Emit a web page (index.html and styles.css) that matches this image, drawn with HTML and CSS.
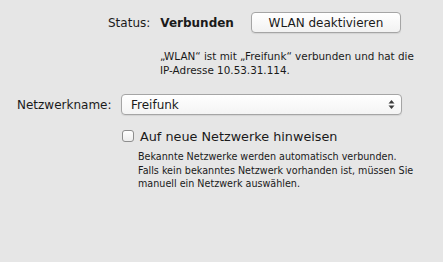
FILE: index.html
```html
<!DOCTYPE html>
<html lang="de">
<head>
  <meta charset="UTF-8">
  <title>Netzwerk – WLAN</title>
  <link rel="stylesheet" href="styles.css">
</head>
<body>
  <!-- WLAN settings pane -->
  <div class="pane">
    <!-- Status row -->
    <div class="status-row">
      <span class="label">Status:</span>
      <span class="status-value">Verbunden</span>
      <button class="mac-button">WLAN deaktivieren</button>
    </div>
    <p class="status-info">„WLAN“ ist mit „Freifunk“ verbunden und hat die<br>IP-Adresse 10.53.31.114.</p>

    <!-- Network name -->
    <div class="network-row">
      <span class="label network-label">Netzwerkname:</span>
      <div class="popup">
        <span>Freifunk</span>
        <svg class="popup-arrows" width="7" height="11" viewBox="0 0 7 11">
          <path d="M3.5 1 L6.5 4.5 L0.5 4.5 Z" fill="#3a3a3a"/>
          <path d="M3.5 10 L6.5 6.5 L0.5 6.5 Z" fill="#3a3a3a"/>
        </svg>
      </div>
    </div>

    <!-- Ask to join new networks -->
    <label class="check-row">
      <span class="checkbox"></span>
      <span class="check-label">Auf neue Netzwerke hinweisen</span>
    </label>
    <p class="check-info">Bekannte Netzwerke werden automatisch verbunden.<br>Falls kein bekanntes Netzwerk vorhanden ist, müssen Sie<br>manuell ein Netzwerk auswählen.</p>
  </div>
</body>
</html>
```

FILE: styles.css
```css
/* Page */
body {
  margin: 0;
  background-color: #e6e6e6;
  font-family: "DejaVu Sans", Verdana, sans-serif;
  color: #1a1a1a;
}

.pane {
  width: 443px;
  height: 262px;
  padding-top: 12px;
  box-sizing: border-box;
}

.label {
  font-size: 12px;
}

/* Status */
.status-row {
  display: flex;
  align-items: center;
  padding-left: 108px;
  height: 21px;
}

.status-value {
  font-size: 12px;
  font-weight: bold;
  margin-left: 10px;
}

.mac-button {
  margin-left: 17px;
  width: 150px;
  height: 21px;
  padding: 0;
  border: 1px solid #a5a5a5;
  border-radius: 4px;
  background: linear-gradient(#ffffff, #f2f2f2);
  box-shadow: 0 1px 1px rgba(0, 0, 0, 0.08);
  font-family: inherit;
  font-size: 12px;
  color: #1a1a1a;
}

.status-info {
  margin: 16px 0 0 160px;
  font-size: 10.4px;
  line-height: 14px;
}

/* Network name */
.network-row {
  display: flex;
  align-items: center;
  margin-top: 17px;
  padding-left: 17px;
}

.network-label {
  width: 104px;
}

.popup {
  width: 281px;
  height: 21px;
  box-sizing: border-box;
  display: flex;
  align-items: center;
  justify-content: space-between;
  padding: 0 6px 0 9px;
  border: 1px solid #a5a5a5;
  border-radius: 4px;
  background: linear-gradient(#ffffff, #f4f4f4);
  box-shadow: 0 1px 1px rgba(0, 0, 0, 0.08);
  font-size: 12px;
}

/* Checkbox */
.check-row {
  display: flex;
  align-items: center;
  margin: 14px 0 0 122px;
  height: 14px;
}

.checkbox {
  width: 12px;
  height: 12px;
  box-sizing: border-box;
  border: 1px solid #8e8e8e;
  border-radius: 3px;
  background: linear-gradient(#ffffff, #ededed);
}

.check-label {
  margin-left: 6px;
  font-size: 12.8px;
}

.check-info {
  margin: 7px 0 0 138px;
  font-size: 9.6px;
  line-height: 13.5px;
}
```
